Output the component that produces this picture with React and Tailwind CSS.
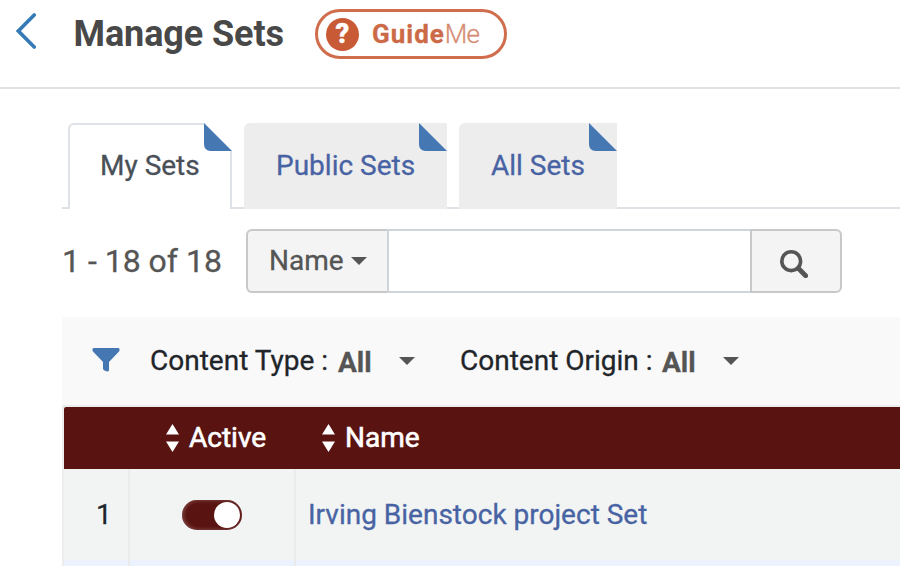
import React from "react";

function Fold() {
  return (
    <svg className="absolute top-0 right-0 h-7 w-7" viewBox="0 0 28 28">
      <path d="M0 0L28 28H6Q0 27 0 21Z" fill="#4578b3" />
    </svg>
  );
}

function Tab({ label, className }) {
  return (
    <div className={`relative h-[86px] rounded-tl-md bg-[#ededed] pl-8 pt-[27px] text-[28px] leading-8 text-[#4863a3] ${className}`}>
      {label}
      <Fold />
    </div>
  );
}

function Caret({ className }) {
  return (
    <svg className={`h-2 w-4 ${className}`} viewBox="0 0 16 8">
      <path d="M0 0H16L8 8Z" fill="#555" />
    </svg>
  );
}

function SortArrows() {
  return (
    <svg className="mr-[10px] mt-[2px] h-7 w-[13px]" viewBox="0 0 13 28" fill="white">
      <path d="M0 10.5L6.5 0L13 10.5Z" />
      <path d="M0 17.5H13L6.5 28Z" />
    </svg>
  );
}

function Header() {
  return (
    <header className="flex h-[89px] items-start border-b-2 border-[#e1e1e1]">
      <svg className="ml-4 mt-[13px] h-9 w-5" viewBox="0 0 20 36" fill="none" stroke="#337ab7" strokeWidth="3.6" strokeLinecap="round" strokeLinejoin="miter">
        <path d="M18.2 2L2.4 18L18.2 34" />
      </svg>
      <h1 className="ml-[37.5px] mt-[13px] w-[242.5px] text-[36px] font-bold leading-[42px] tracking-[-0.1px] text-[#484848] [-webkit-text-stroke:0px]">Manage Sets</h1>
      <div className="mt-[9px] -ml-px flex h-[50px] w-[192px] items-center rounded-full border-[3.5px] border-[#cf6d4c] pl-2">
        <div className="flex h-[33px] w-[33px] items-center justify-center rounded-full bg-[#c85b35] text-[27px] font-black leading-none text-white">?</div>
        <span className="ml-[13px] text-[26px] font-bold leading-8 tracking-[1px] text-[#cc6a47]">Guide</span>
        <span className="text-[26px] font-light leading-8 tracking-[-0.9px] text-[#d58c73]">Me</span>
      </div>
    </header>
  );
}

function Tabs() {
  return (
    <nav className="ml-[62px] mt-[34px] flex h-[86px] items-start">
      <div className="h-[86px] w-[7px] border-b-2 border-[#dee2e6]" />
      <div className="relative -ml-px h-[86px] w-[164px] rounded-tl-md border-x-2 border-t-2 border-[#dee2e6] pl-[30px] pt-[25px] text-[28px] leading-8 text-[#495057]">
        My Sets
        <svg className="absolute -right-[2px] -top-[2px] h-7 w-7 bg-white" viewBox="0 0 28 28">
          <path d="M0 0L28 28H6Q0 27 0 21Z" fill="#4578b3" />
        </svg>
      </div>
      <div className="h-[86px] w-3 border-b-2 border-[#dee2e6]" />
      <Tab label="Public Sets" className="w-[203px]" />
      <div className="h-[86px] w-3 border-b-2 border-[#dee2e6]" />
      <Tab label="All Sets" className="w-[158px]" />
      <div className="h-[86px] flex-1 border-b-2 border-[#dee2e6]" />
    </nav>
  );
}

function SearchBar() {
  return (
    <div className="ml-[62px] mt-5 flex h-16">
      <div className="w-[184px] pt-[13px] text-[32px] leading-[38px] text-[#555]">1 - 18 of 18</div>
      <button className="flex h-16 w-[141px] items-start rounded-l-md border-2 border-r-0 border-[#c8c8c8] bg-[#f4f4f4] pl-[21px] pt-[14px] text-[28px] leading-8 text-[#555]">
        Name
        <Caret className="ml-[7px] mt-[12px]" />
      </button>
      <div className="w-[363px] border-y-2 border-l-2 border-[#ced4da] bg-white" />
      <button className="flex h-16 w-[92px] items-start rounded-r-md border-2 border-[#c8c8c8] bg-[#f4f4f4] pl-7 pt-[19px]">
        <svg className="h-7 w-7" viewBox="0 0 28 28" fill="none" stroke="#555">
          <circle cx="11.2" cy="11.2" r="9.4" strokeWidth="3.6" />
          <path d="M18.5 18.5L25.7 25.7" strokeWidth="4.8" strokeLinecap="round" />
        </svg>
      </button>
    </div>
  );
}

function Filters() {
  return (
    <div className="flex h-[88px] items-start bg-[#f9f9f9] pl-[30px] pt-[28px] text-[28px] leading-8 text-[#212529]">
      <svg className="mt-[3px] h-6 w-7" viewBox="0 0 28 24">
        <path d="M1.5 0H26.5Q28.5 1 27 3.5L17 14V22Q17 24 14.5 23.3L12.5 22.5Q11 22 11 20.5V14L1 3.5Q-.5 1 1.5 0Z" fill="#4578b3" />
      </svg>
      <span className="ml-[30px] w-[188px] whitespace-nowrap">Content Type :</span>
      <span className="mt-0.5 w-[61px] font-bold text-[#555]">All</span>
      <Caret className="mt-[12px]" />
      <span className="ml-[45px] w-[202px] whitespace-nowrap">Content Origin :</span>
      <span className="mt-0.5 w-[61px] font-bold text-[#555]">All</span>
      <Caret className="mt-[12px]" />
    </div>
  );
}

function SetsTable() {
  return (
    <div className="border-l-2 border-t-2 border-[#ededed]">
      <div className="flex h-[62px] items-start rounded-tl-[2px] bg-[#591311] pt-[15px] text-[28px] leading-8 text-white [-webkit-text-stroke:0.6px]">
        <div className="ml-[102px] flex w-[156px]">
          <SortArrows />
          Active
        </div>
        <div className="flex">
          <SortArrows />
          Name
        </div>
      </div>
      <div className="flex h-[91px] bg-[#f2f4f3] text-[28px] leading-8">
        <div className="w-[66px] border-r-2 border-[#ebebeb] pl-8 pt-[30px] text-[#212529]">1</div>
        <div className="w-[166px] border-r-2 border-[#ebebeb] pl-[52px] pt-[31px]">
          <div className="flex h-[30px] w-[60px] items-center justify-end rounded-full bg-[#591311] pr-[2px] shadow-[inset_1px_0_4px_#8a5856]">
            <div className="h-[26px] w-[26px] rounded-full bg-white" />
          </div>
        </div>
        <div className="pl-3 pt-[30px] text-[#4863a3]">Irving Bienstock project Set</div>
      </div>
      <div className="flex h-[6px] bg-[#edf3fe]">
        <div className="w-[66px] border-r-2 border-[#ebebeb]" />
        <div className="w-[166px] border-r-2 border-[#ebebeb]" />
      </div>
    </div>
  );
}

export default function App() {
  return (
    <div className="h-[566px] w-[900px] overflow-hidden bg-white font-['Roboto',sans-serif] [-webkit-text-stroke:0.3px]">
      <Header />
      <Tabs />
      <SearchBar />
      <main className="ml-[62px] mt-6">
        <Filters />
        <SetsTable />
      </main>
    </div>
  );
}
